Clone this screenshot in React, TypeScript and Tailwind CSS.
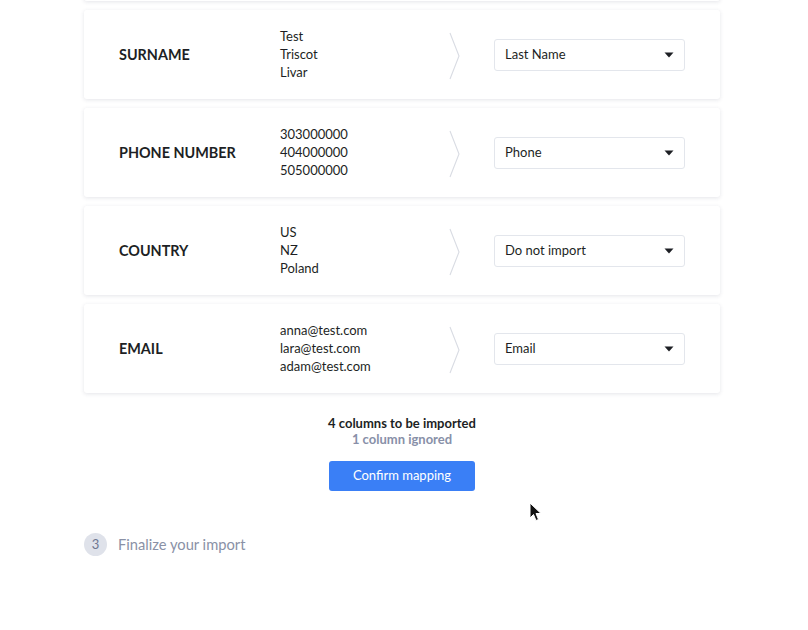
import React from 'react';

interface MappingRow {
  label: string;
  samples: string[];
  target: string;
}

const rows: MappingRow[] = [
  { label: 'Surname', samples: ['Test', 'Triscot', 'Livar'], target: 'Last Name' },
  { label: 'Phone number', samples: ['303000000', '404000000', '505000000'], target: 'Phone' },
  { label: 'Country', samples: ['US', 'NZ', 'Poland'], target: 'Do not import' },
  { label: 'Email', samples: ['anna@test.com', 'lara@test.com', 'adam@test.com'], target: 'Email' },
];

const cardClass = 'h-[89px] rounded-[3px] bg-white shadow-[0_1px_4px_rgba(30,40,70,0.12)]';

const Chevron = () => (
  <svg width="12" height="48" viewBox="0 0 12 48" fill="none">
    <path d="M1 1 L10 24 L1 47" stroke="#d9dce3" strokeWidth="1.1" />
  </svg>
);

const Select = ({ value }: { value: string }) => (
  <div className="flex h-[32px] w-[191px] items-center justify-between rounded-[3px] border border-[#e3e6ec] bg-white pl-[10px] pr-[10px] text-[13px] text-[#1d1f24]">
    <span>{value}</span>
    <svg width="10" height="6" viewBox="0 0 10 6">
      <path d="M0.5 0.5 L9.5 0.5 L5 5.5 Z" fill="#1d1f24" />
    </svg>
  </div>
);

const MappingCard = ({ row }: { row: MappingRow }) => (
  <div className={`flex items-center pl-[35px] ${cardClass}`}>
    <div className="w-[161px] text-[14.4px] font-bold uppercase text-[#1d1f24]">{row.label}</div>
    <div className="-mt-[2px] w-[169px] text-[13px] leading-[18px] text-[#1d1f24]">
      {row.samples.map((s) => (
        <div key={s}>{s}</div>
      ))}
    </div>
    <div className="mt-[2px] w-[45px]">
      <Chevron />
    </div>
    <Select value={row.target} />
  </div>
);

export default function App() {
  return (
    <div
      className="relative h-[630px] w-[808px] overflow-hidden bg-white"
      style={{ fontFamily: 'Lato, "Noto Sans", sans-serif' }}
    >
      <div className="ml-[84px] w-[636px]">
        <div className="flex flex-col gap-[9px]">
          {/* tail of the row above, scrolled out of view */}
          <div className={`-mt-[88px] ${cardClass}`} />
          {rows.map((r) => (
            <MappingCard key={r.label} row={r} />
          ))}
        </div>

        <div className="mt-[22px] flex flex-col items-center">
          <div className="text-[13px] font-bold leading-[16px] text-[#1d1f24]">4 columns to be imported</div>
          <div className="text-[13px] font-bold leading-[16px] text-[#8890a8]">1 column ignored</div>
          <button className="mt-[14px] h-[30px] w-[146px] rounded-[3px] bg-[#3a7ff6] text-[13px] text-white">
            Confirm mapping
          </button>
        </div>
      </div>

      <div className="ml-[84px] mt-[42px] flex items-center gap-[11px]">
        <div className="flex h-[23px] w-[23px] items-center justify-center rounded-full bg-[#dfe2ea] text-[13px] text-[#6f7790]">
          3
        </div>
        <div className="text-[14.7px] text-[#8a91a6]">Finalize your import</div>
      </div>

      {/* mouse pointer */}
      <svg className="absolute left-[529px] top-[502px]" width="13" height="20" viewBox="0 0 13 20">
        <path d="M1 1 L1 16 L4.5 12.5 L7 18.5 L9.5 17.5 L7 11.5 L12 11.5 Z" fill="#111" stroke="#fff" strokeWidth="1" />
      </svg>
    </div>
  );
}
